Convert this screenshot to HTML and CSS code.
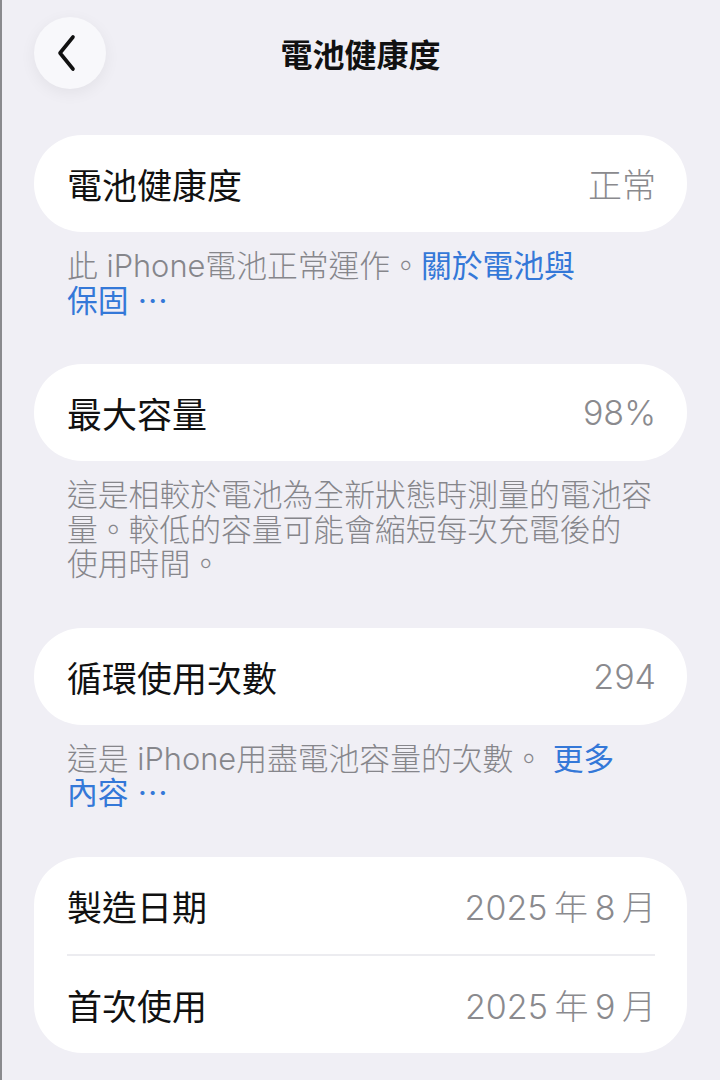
FILE: index.html
```html
<!DOCTYPE html>
<html lang="zh-Hant">
<head>
<meta charset="utf-8">
<title>電池健康度</title>
<link rel="stylesheet" href="styles.css">
</head>
<body>
<div class="page">
  <header class="nav">
    <div class="back">
      <svg width="26" height="40" viewBox="0 0 26 40"><path d="M19 4 L6 20 L19 36" fill="none" stroke="#111" stroke-width="3.6" stroke-linecap="round" stroke-linejoin="round"/></svg>
    </div>
    <h1 class="title">電池健康度</h1>
    <div></div>
  </header>

  <section class="card">
    <div class="row"><span class="label">電池健康度</span><span class="value">正常</span></div>
  </section>
  <p class="note">此 iPhone電池正常運作。<span class="link">關於電池與<br>保固 ⋯</span></p>

  <section class="card">
    <div class="row"><span class="label">最大容量</span><span class="value">98%</span></div>
  </section>
  <p class="note">這是相較於電池為全新狀態時測量的電池容<br>量。較低的容量可能會縮短每次充電後的<br>使用時間。</p>

  <section class="card">
    <div class="row"><span class="label">循環使用次數</span><span class="value">294</span></div>
  </section>
  <p class="note">這是 iPhone用盡電池容量的次數。 <span class="link">更多<br>內容 ⋯</span></p>

  <section class="card">
    <div class="row"><span class="label">製造日期</span><span class="value">2025 年 8 月</span></div>
    <div class="divider"></div>
    <div class="row"><span class="label">首次使用</span><span class="value">2025 年 9 月</span></div>
  </section>
</div>
</body>
</html>
```

FILE: styles.css
```css
html, body {
  margin: 0;
  padding: 0;
}
body {
  background: #f0eff5;
  font-family: "Inter", "Noto Sans CJK TC", sans-serif;
  border-left: 2px solid #8a8a8e;
  min-height: 1080px;
  box-sizing: border-box;
}
.page {
  padding: 0 33px 0 32px;
}
.nav {
  display: grid;
  grid-template-columns: 72px 1fr 72px;
  align-items: center;
  align-content: start;
  padding-top: 17px;
  height: 135px;
  box-sizing: border-box;
}
.back {
  width: 72px;
  height: 72px;
  border-radius: 50%;
  background: #f8f8fb;
  box-shadow: 0 4px 16px rgba(0, 0, 0, 0.06);
  display: flex;
  align-items: center;
  justify-content: center;
}
.back svg {
  margin-left: -6px;
}
.title {
  margin: 0;
  text-align: center;
  font-family: "Noto Sans CJK TC", sans-serif;
  font-size: 32px;
  font-weight: 700;
  color: #111;
}
.card {
  background: #fff;
  border-radius: 48px;
}
.row {
  height: 97px;
  display: flex;
  align-items: center;
  justify-content: space-between;
  padding: 0 31px 0 33px;
}
.label {
  font-family: "Noto Sans CJK TC", sans-serif;
  font-size: 35px;
  color: #111;
  font-weight: 400;
}
.value {
  font-size: 34px;
  color: #8a8a8e;
  font-weight: 300;
  word-spacing: -3px;
}
.divider {
  height: 2px;
  background: #ececf0;
  margin: 0 32px 0 33px;
}
.note {
  margin: 17px 0 46px;
  padding-left: 33px;
  font-size: 30.8px;
  line-height: 34.5px;
  color: #86868b;
  font-weight: 300;
  white-space: nowrap;
}
.link {
  color: #3478d8;
  font-weight: 400;
}
```
